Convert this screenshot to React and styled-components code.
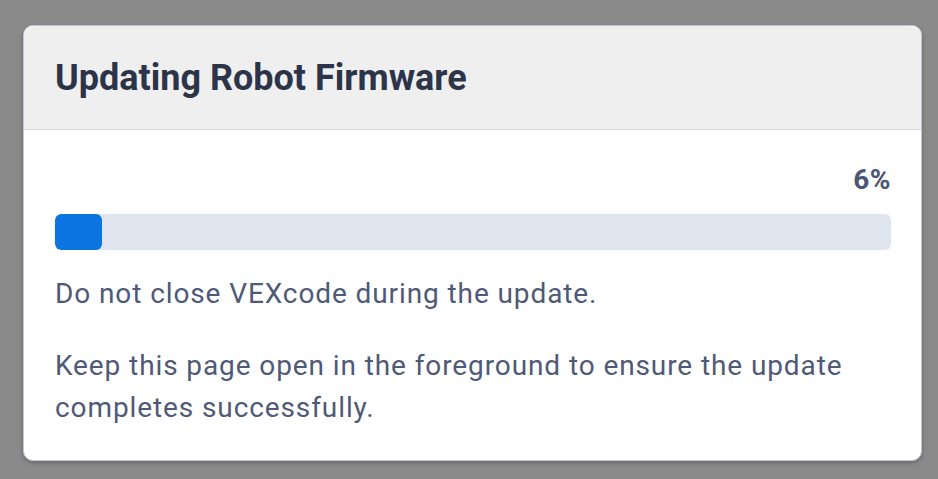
import React from 'react'
import styled, { createGlobalStyle } from 'styled-components'

const GlobalStyle = createGlobalStyle`
  html, body {
    margin: 0;
    padding: 0;
    background: #8a8a8a;
    font-family: Roboto, 'Liberation Sans', sans-serif;
  }
`

const Page = styled.div`
  width: 938px;
  height: 479px;
  padding: 25px 16px 0 23px;
  box-sizing: border-box;
`

const Card = styled.div`
  width: 899px;
  background: #fff;
  border: 1px solid #c4c6d4;
  border-radius: 10px;
  box-shadow: 0 2px 4px rgba(0, 0, 0, 0.25);
  overflow: hidden;
  box-sizing: border-box;
`

const Header = styled.div`
  height: 104px;
  display: flex;
  align-items: center;
  padding: 0 31px;
  background: #efefef;
  border-bottom: 1px solid #d6d7de;
  box-sizing: border-box;
`

const Title = styled.h2`
  margin: 0;
  font-size: 36px;
  font-weight: 700;
  color: #2c3449;
`

const Body = styled.div`
  padding: 29px 30px 32px 31px;
  display: flex;
  flex-direction: column;
`

const Percent = styled.div`
  align-self: flex-end;
  font-size: 28px;
  letter-spacing: 0.5px;
  line-height: 41.6px;
  font-weight: 700;
  color: #4b5574;
`

const Track = styled.div`
  margin-top: 13px;
  height: 36px;
  border-radius: 6px;
  background: #dee5ee;
  overflow: hidden;
`

const Fill = styled.div`
  height: 100%;
  min-width: 47px;
  border-radius: 6px;
  background: #0b74e1;
`

const Text = styled.p`
  margin: ${({ $first }) => ($first ? '23px' : '31px')} 0 0;
  font-size: 28px;
  letter-spacing: 0.9px;
  line-height: 41.6px;
  color: #4f5978;
`

export default function App() {
  const progress = 6
  return (
    <>
      <GlobalStyle />
      <Page>
        <Card>
          <Header>
            <Title>Updating Robot Firmware</Title>
          </Header>
          <Body>
            <Percent>{progress}%</Percent>
            <Track>
              <Fill style={{ width: `${progress * 0.9}%` }} />
            </Track>
            <Text $first>Do not close VEXcode during the update.</Text>
            <Text>
              Keep this page open in the foreground to ensure the update
              completes successfully.
            </Text>
          </Body>
        </Card>
      </Page>
    </>
  )
}
